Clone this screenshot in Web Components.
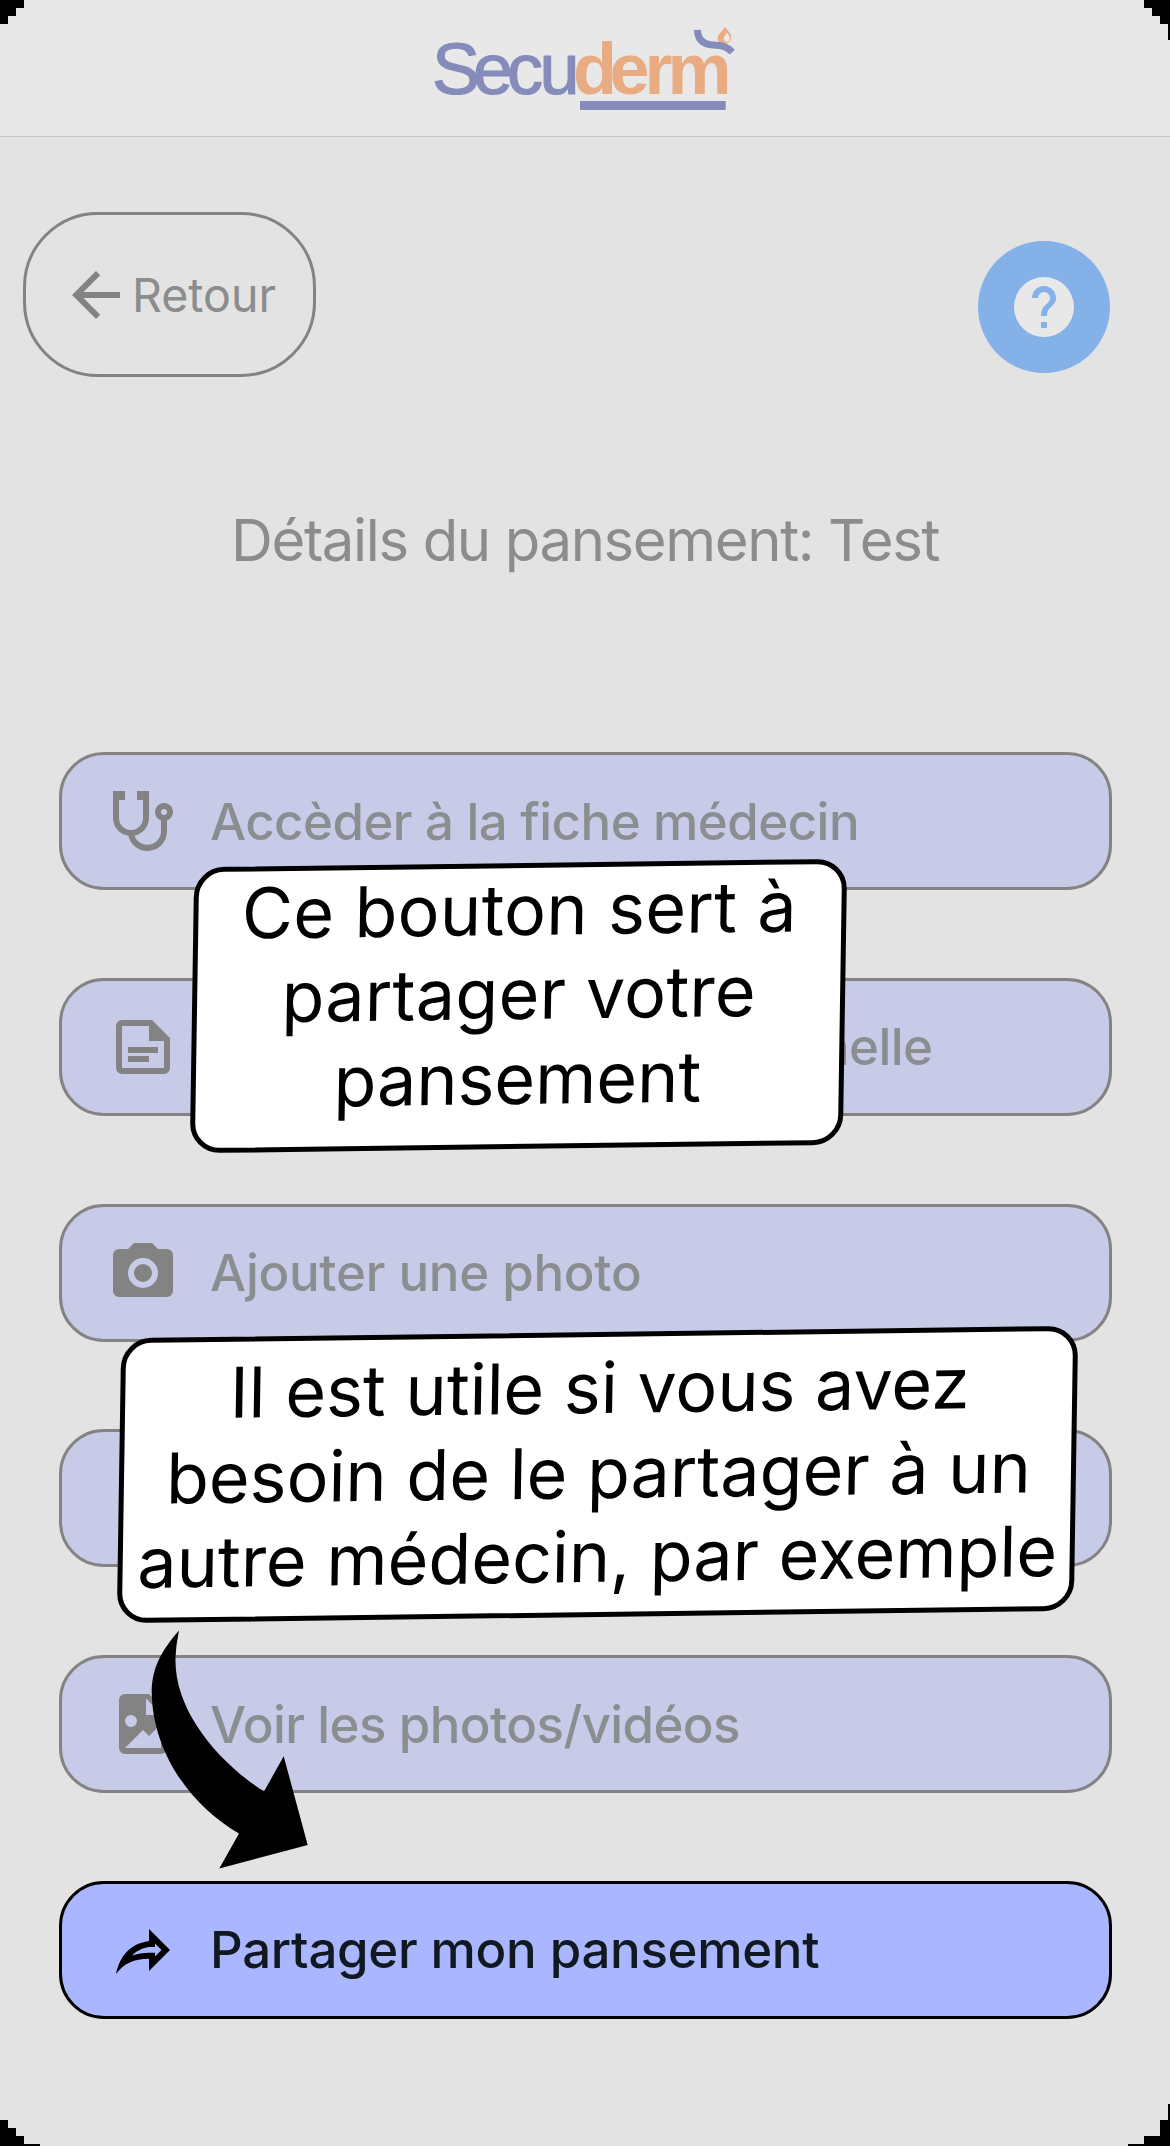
<!DOCTYPE html>
<html lang="fr">
<head>
<meta charset="utf-8">
<title>Secuderm</title>
<style>
html,body{margin:0;padding:0}
body{width:1170px;height:2146px;overflow:hidden;background:#e3e3e3;font-family:Inter,"Noto Sans",sans-serif}
</style>
</head>
<body>
<secu-app></secu-app>
<script>
const define = (name, html) => customElements.define(name, class extends HTMLElement {
  constructor() {
    super();
    const t = document.createElement('template');
    t.innerHTML = html;
    this.attachShadow({ mode: 'open' }).appendChild(t.content.cloneNode(true));
  }
});

const icons = {
  back: 'M20 11H7.83l5.59-5.59L12 4l-8 8 8 8 1.41-1.41L7.83 13H20z',
  help: 'M12 2a10 10 0 1 0 0 20 10 10 0 0 0 0-20zm1 17h-2v-2h2zm2.07-7.75l-.9.92C13.45 12.9 13 13.5 13 15h-2v-.5c0-1.1.45-2.1 1.17-2.83l1.24-1.26c.37-.36.59-.86.59-1.41a2 2 0 0 0-4 0H8a4 4 0 0 1 8 0c0 .88-.36 1.68-.93 2.25z',
  stethoscope: 'M19 8a1 1 0 1 1 0 2 1 1 0 0 1 0-2M2 2v9c0 2.96 2.19 5.5 5.14 5.91C7.76 19.92 10.42 22 13.5 22a6.5 6.5 0 0 0 6.5-6.5v-3.69A3 3 0 1 0 16 9c0 1.29.84 2.4 2 2.81v3.6c0 2.5-2 4.5-4.5 4.5-2 0-3.68-1.21-4.28-3.01C12 16.3 14 13.8 14 11V2h-4v3h2v6a4 4 0 0 1-8 0V5h2V2z',
  note: 'M15 3H5a2 2 0 0 0-2 2v14a2 2 0 0 0 2 2h14a2 2 0 0 0 2-2V9zM19 19H5V5h9v5h5zM7 12h10v2H7zM7 15h7v2H7z',
  camera: 'M4 4h3l2-2h6l2 2h3a2 2 0 0 1 2 2v12a2 2 0 0 1-2 2H4a2 2 0 0 1-2-2V6a2 2 0 0 1 2-2M12 7a5 5 0 1 0 0 10 5 5 0 0 0 0-10M12 9a3 3 0 1 1 0 6 3 3 0 0 1 0-6z',
  picture: 'M13 9h5.5L13 3.5zM6 2h8l6 6v12a2 2 0 0 1-2 2H6a2 2 0 0 1-2-2V4a2 2 0 0 1 2-2M6 20h12v-8l-4 4-2-2zM8 9a2 2 0 1 0 0 4 2 2 0 0 0 0-4z',
  share: 'M14 5v4C7 10 4 15 3 20c2.5-3.5 6-5.1 11-5.1V19l7-7zM16 9.83L18.17 12 16 14.17V12.9h-2c-2.07 0-3.93.38-5.66.95C9.74 12.46 11.54 11.37 14 11h2z'
};
customElements.define('secu-icon', class extends HTMLElement {
  constructor() { super(); this.attachShadow({ mode: 'open' }); }
  connectedCallback() {
    this.shadowRoot.innerHTML = `<style>:host{display:block;width:72px;height:72px;flex:none}svg{display:block}</style>
      <svg width="72" height="72" viewBox="0 0 24 24" fill="currentColor" fill-rule="evenodd"><path d="${icons[this.getAttribute('name')] || ''}"/></svg>`;
  }
});

define('secu-header', `<style>
  :host{display:block;box-sizing:border-box;height:137px;background:#e8e8e8;border-bottom:1px solid #c6c6c6}
  svg{display:block}
  text{font-family:"Liberation Sans",Arial,sans-serif;font-size:72px}
</style>
<svg width="1170" height="136" viewBox="0 0 1170 136">
  <text x="432 473 507 539.5" y="93.500" fill="#858cba" stroke="#858cba" stroke-width="1.200">Secu</text>
  <text x="573 609.5 644.5 667.5" y="93.500" fill="#e8ab82" font-weight="700">derm</text>
  <rect x="580" y="101" width="145.700" height="9" fill="#858cba"/>
  <path fill="#e8ab82" fill-rule="evenodd" d="M725 26.800C723 31 717.700 34 717.700 38.500C717.700 41 719 42.500 721 43.300L727 43.500C730 42 731.300 40 731.300 37.200C731.300 33 727 30.500 725 26.800ZM727 32.500C728.500 34.500 730 36.500 730 38.500C730 40.500 728.700 42 727 42C725 42 723.700 40.500 723.700 38.500C723.700 36.500 726 34.500 727 32.500Z"/>
  <path d="M697.400 29.800C697.800 40.500 704 44.500 713 45C722 45.400 727 46.500 732.300 52.200" fill="none" stroke="#858cba" stroke-width="7"/>
</svg>`);

define('secu-back', `<style>
  :host{display:flex;align-items:center;box-sizing:border-box;width:293px;height:165px;padding-left:34px;border:3px solid #838383;border-radius:75px;color:#838383}
  span{font-size:46.500px;color:#8b8c8c;white-space:nowrap}
</style><secu-icon name="back"></secu-icon><span><slot></slot></span>`);

define('secu-help', `<style>
  :host{display:flex;align-items:center;justify-content:center;width:132px;height:132px;border-radius:50%;background:#83b1e8;color:#e8e8e8}
</style><secu-icon name="help"></secu-icon>`);

define('secu-item', `<style>
  :host{display:flex;align-items:center;box-sizing:border-box;height:138px;padding-left:45px;border:3px solid #838383;border-radius:45px;background:#c8cbe8;color:#838383}
  span{margin-left:31px;font-size:51px;font-weight:500;letter-spacing:var(--track,-.54px);color:#8b8e91;white-space:nowrap}
  :host([trailing]) span{margin-left:auto;margin-right:176.500px}
  :host([active]){background:#aab6ff;border-color:#000;color:#000}
  :host([active]) span{color:#101820}
</style><secu-icon></secu-icon><span><slot></slot></span>`);

customElements.define('secu-action', class extends customElements.get('secu-item') {
  connectedCallback() {
    const i = this.shadowRoot.querySelector('secu-icon');
    const name = this.getAttribute('icon');
    if (name) { i.setAttribute('name', name); i.connectedCallback(); }
  }
});

define('secu-bubble', `<style>
  :host{position:absolute;box-sizing:border-box;border:5px solid #000;border-radius:30px;background:#fff;color:#000;text-align:center;font-size:70px;line-height:84.700px;white-space:nowrap;transform:matrix(1,-.013,-.0155,1,0,0)}
  div{margin:var(--shift,0) -22px 0 -20px}
</style><div><slot></slot></div>`);

define('secu-arrow', `<style>:host{position:absolute;left:150px;top:1629px}svg{display:block}</style>
<svg width="160" height="242" viewBox="150 1629 160 242"><path d="M179 1630.500C161 1651 152 1668 151.700 1692C152.500 1752 190 1805 239 1833.500L219.300 1868.500L307.700 1845L283.700 1756.300L264 1791.500C215 1760 170 1705 176 1651C176.500 1643 178 1637 179 1630.500Z"/></svg>`);

define('secu-corners', `<style>:host{position:absolute;left:0;top:0}svg{display:block}</style>
<svg width="1170" height="2146" shape-rendering="crispEdges">
<path d="M0 0H24V8H16V16H8V24H0zM1170 0H1144V8H1152V16H1160V24H1168V40H1170zM0 2146V2120H8V2128H16V2136H24V2144H40V2146zM1170 2146V2104H1168V2120H1160V2136H1144V2144H1128V2146z"/></svg>`);

define('secu-app', `<style>
  :host{display:block;position:relative;width:1170px;height:2146px;overflow:hidden;background:#e3e3e3}
  .bar{display:flex;justify-content:space-between;align-items:flex-start;padding:75px 60px 0 23px}
  secu-help{margin-top:29px}
  h1{margin:125px 0 0;height:76px;line-height:76px;text-align:center;font-size:58px;font-weight:400;letter-spacing:-1.35px;color:#8b8c8c;white-space:nowrap}
  .list{display:flex;flex-direction:column;gap:87.800px;padding:174px 58px 0 59px}
</style>
<secu-header></secu-header>
<div class="bar"><secu-back>Retour</secu-back><secu-help></secu-help></div>
<h1>Détails du pansement: Test</h1>
<div class="list">
  <secu-action icon="stethoscope">Accèder à la fiche médecin</secu-action>
  <secu-action icon="note" trailing>nelle</secu-action>
  <secu-action icon="camera" style="--track:-.28px">Ajouter une photo</secu-action>
  <secu-action></secu-action>
  <secu-action icon="picture" style="--track:-.6px">Voir les photos/vidéos</secu-action>
  <secu-action icon="share" active style="--track:-.32px">Partager mon pansement</secu-action>
</div>
<secu-bubble style="left:192px;top:863px;width:653px;height:286px;--shift:-.5px"><span style="letter-spacing:.3px;margin-right:3px">Ce bouton sert à</span><br><span style="letter-spacing:.2px;margin-right:2px">partager votre</span><br><span style="letter-spacing:-.1px;margin-right:2px">pansement</span></secu-bubble>
<secu-bubble style="left:119px;top:1332px;width:957px;height:285px;--shift:9px;letter-spacing:-.04px">Il est utile si vous avez<br>besoin de le partager à un<br>autre médecin, par exemple</secu-bubble>
<secu-arrow></secu-arrow>
<secu-corners></secu-corners>`);
</script>
</body>
</html>
